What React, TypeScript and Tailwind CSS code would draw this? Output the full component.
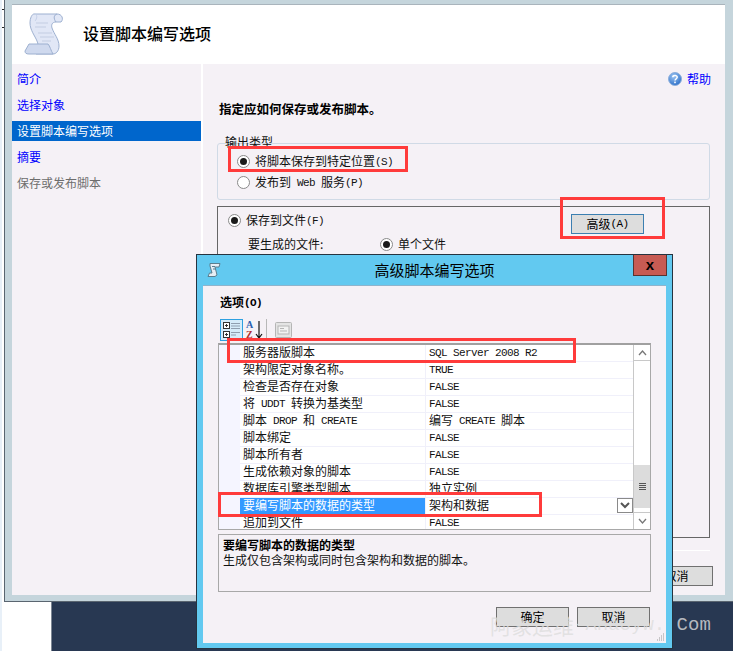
import type { ReactNode } from "react";

const rows = [
  ["服务器版脚本", "SQL Server 2008 R2"],
  ["架构限定对象名称。", "TRUE"],
  ["检查是否存在对象", "FALSE"],
  ["将 UDDT 转换为基类型", "FALSE"],
  ["脚本 DROP 和 CREATE", "编写 CREATE 脚本"],
  ["脚本绑定", "FALSE"],
  ["脚本所有者", "FALSE"],
  ["生成依赖对象的脚本", "FALSE"],
  ["数据库引擎类型脚本", "独立实例"],
  ["要编写脚本的数据的类型", "架构和数据"],
  ["追加到文件", "FALSE"],
];

// Latin runs are narrower than the CJK text around them, as in the old bitmap dialog font
function T({ children }: { children: string }) {
  const parts = children.split(/([\x20-\x7e]+)/).filter(Boolean);
  return (
    <>
      {parts.map((p, i) =>
        /^[\x20-\x7e]+$/.test(p) ? (
          <span key={i} className="whitespace-pre align-[1px] text-[11px] tracking-[-0.6px] [font-family:'Liberation_Mono',monospace]">
            {p}
          </span>
        ) : (
          <span key={i}>{p}</span>
        )
      )}
    </>
  );
}

function Radio({ on }: { on?: boolean }) {
  return (
    <span className="flex h-[13px] w-[13px] shrink-0 items-center justify-center rounded-full border border-[#8a8a8a] bg-white">
      {on && <span className="h-[7px] w-[7px] rounded-full bg-[#1a1a1a]" />}
    </span>
  );
}

function Red({ className }: { className: string }) {
  return <div className={"pointer-events-none absolute z-20 border-[3px] border-[#ff3b3b] " + className} />;
}

function Btn({ children, className }: { children: ReactNode; className: string }) {
  return (
    <div className={"flex h-[20px] items-center justify-center bg-[#dddddd] text-black " + className}>{children}</div>
  );
}

function ScrollIcon() {
  return (
    <svg width="40" height="42" viewBox="0 0 40 42">
      <path
        d="M10 1H33C38 1 40 6 37 9H32C28 9 27 12 28 15C30 21 35 26 35 33C35 38 32 41 29 41H12C15 38 15 33 13 28C11 23 6 17 6 10C6 5 8 1 10 1Z"
        fill="#e1e7f6"
        stroke="#9db0d0"
      />
      <path d="M10 1C14 1 13 6 11 8" fill="none" stroke="#c6d1e8" />
      <path d="M33 1C30 2 29 5 32 9" fill="none" stroke="#9db0d0" />
      <path d="M12 10H24M11 14H22M14 20H28M16 24H30M18 28H27" stroke="#c3cee2" strokeWidth="1.2" />
      <path d="M1 38L5 31H24C26 33 27 38 29 41H5C2 41 1 40 1 38Z" fill="#cfd9ee" stroke="#9db0d0" />
    </svg>
  );
}

function HelpIcon() {
  return (
    <svg width="14" height="14" viewBox="0 0 14 14" className="shrink-0">
      <defs>
        <radialGradient id="hg" cx="0.4" cy="0.3" r="0.8">
          <stop offset="0" stopColor="#9cc4f2" />
          <stop offset="1" stopColor="#1f66c4" />
        </radialGradient>
      </defs>
      <circle cx="7" cy="7" r="6.5" fill="url(#hg)" stroke="#8fb0dc" />
      <path d="M4.8 5.3C4.9 3 9.3 3 9.2 5.3C9.1 6.9 7 6.7 7 8.6" fill="none" stroke="#fff" strokeWidth="1.5" />
      <rect x="6.2" y="9.6" width="1.6" height="1.6" fill="#fff" />
    </svg>
  );
}

function CategorizedIcon() {
  return (
    <svg width="18" height="18" viewBox="0 0 18 18">
      <rect x="0.5" y="1.5" width="6" height="6" fill="#fff" stroke="#333" />
      <path d="M2 4.5H5M3.5 3V6" stroke="#333" />
      <rect x="0.5" y="10.5" width="6" height="6" fill="#fff" stroke="#333" />
      <path d="M2 13.5H5M3.5 12V15" stroke="#333" />
      <path d="M8 2.5H17M8 5H17M8 7.5H17M8 11.5H17M8 14H13" stroke="#8f9fb0" />
    </svg>
  );
}

function PagesIcon() {
  return (
    <svg width="17" height="16" viewBox="0 0 17 16">
      <rect x="0.5" y="0.5" width="16" height="15" rx="1" fill="#e4e4e4" stroke="#b5b5b5" />
      <rect x="3" y="4" width="11" height="8" fill="#f2f2f2" stroke="#b5b5b5" />
      <path d="M5 6.5H9M5 9H12" stroke="#b5b5b5" />
    </svg>
  );
}

export default function App() {
  return (
    <div className="relative h-[651px] w-[733px] overflow-hidden bg-white text-[12px] leading-4 text-[#111] [font-family:'Noto_Sans_CJK_SC','Liberation_Sans',sans-serif]">
      <div className="absolute left-0 top-0 h-full w-[2px] bg-[#e8f0f8]" />
      <div className="absolute left-[2px] top-[9px] h-px w-[2px] bg-[#222]" />
      <div className="absolute left-[2px] top-[27px] h-px w-[2px] bg-[#222]" />
      <div className="absolute bottom-0 left-[51px] right-0 top-[602px] border-l border-[#7d8794] bg-[#283852]" />

      {/* wizard window behind */}
      <div className="absolute left-[4px] top-0 h-[602px] w-[729px] border-b border-l border-[#5a6570] bg-[#c5d5dc] pl-[7px] pr-[8px] pt-[4px]">
        <div className="flex h-[591px] flex-col border-t border-[#a9b4bc] bg-[#f5f1f6]">
          <div className="flex h-[59px] shrink-0 items-center bg-white">
            <div className="ml-[12px] mt-[-1px]">
              <ScrollIcon />
            </div>
            <div className="ml-[19px] mt-[-3px] text-[16px] font-medium text-black">设置脚本编写选项</div>
          </div>
          <div className="flex flex-1">
            <div className="w-[189px] shrink-0 pt-[5px] text-[#0000ff]">
              {["简介", "选择对象", "设置脚本编写选项", "摘要", "保存或发布脚本"].map((s, i) => (
                <div
                  key={s}
                  className={
                    "flex h-[20px] items-center pl-[5px] mb-[6px] " +
                    (i === 2 ? "bg-[#0066cc] text-white " : "") +
                    (i === 4 ? "text-[#6d6d6d]" : "")
                  }
                >
                  {s}
                </div>
              ))}
            </div>
            <div className="w-[2px] bg-white" />
            <div className="relative flex flex-1 flex-col pl-[14px] pr-[15px]">
              <div className="-mr-px mt-[8px] flex h-[14px] items-center justify-end gap-[5px] text-[#0000ff]">
                <HelpIcon />
                <span>帮助</span>
              </div>
              <div className="mt-[15px] ml-[2px] h-[16px] text-[12.5px] font-bold text-black">指定应如何保存或发布脚本。</div>
              <div className="relative mt-[26px] flex h-[57px] flex-col gap-[5px] rounded-[3px] border border-[#d0dae6] pl-[19px] pt-[9px]">
                <span className="absolute left-[7px] top-[-10px]">输出类型</span>
                <div className="flex h-[16px] items-center gap-[5px]">
                  <Radio on />
                  <span>
                    <T>将脚本保存到特定位置(S)</T>
                  </span>
                </div>
                <div className="flex h-[16px] items-center gap-[5px]">
                  <Radio />
                  <span>
                    <T>发布到 Web 服务(P)</T>
                  </span>
                </div>
              </div>
              <div className="mt-[6px] h-[332px] border border-[#666666] px-[10px] pt-[5px]">
                <div className="flex items-start justify-between">
                  <div className="flex h-[16px] items-center gap-[5px]">
                    <Radio on />
                    <span>
                      <T>保存到文件(F)</T>
                    </span>
                  </div>
                  <Btn className="mr-[55px] mt-[2px] w-[73px] border border-[#3c7fb1]">
                    <T>高级(A)</T>
                  </Btn>
                </div>
                <div className="ml-[20px] mt-[2px] flex h-[16px] items-center">
                  <span className="w-[132px]">要生成的文件:</span>
                  <Radio on />
                  <span className="ml-[5px]">单个文件</span>
                </div>
              </div>
              <div className="mt-[12px] border-t border-white" />
              <div className="mt-[15px] flex justify-end">
                <Btn className="-mr-[3px] w-[73px] border border-[#707070]">取消</Btn>
              </div>
            </div>
          </div>
        </div>
      </div>

      {/* advanced options dialog */}
      <div className="absolute left-[196px] top-[254px] z-10 h-[395px] w-[477px] border border-[#26333f] bg-[#62c9f0] px-[6px] pb-[6px] pt-[30px]">
        <div className="absolute right-[5px] top-0 flex h-[21px] w-[34px] items-center justify-center border border-t-0 border-[#5a3330] bg-[#c75b53] text-[15px] font-bold text-black [font-family:'Liberation_Sans',sans-serif]">
          x
        </div>
        <div className="absolute left-[10px] top-[8px]">
          <svg width="14" height="14" viewBox="0 0 14 14">
            <path d="M3 .5H13L12 4H8L10 12L8 13.5H1L2.5 10H5L3 3Z" fill="#e6eef5" stroke="#5b7e8e" />
            <path d="M5 3.5H8M6 6H9" stroke="#5b7e8e" />
          </svg>
        </div>
        <div className="absolute inset-x-0 top-[5px] text-center text-[15px] leading-5 text-black">高级脚本编写选项</div>

        <div className="flex h-[358px] flex-col border-t border-[#8fb4cc] bg-[#f5f1f6] pl-[15px] pr-[15px]">
          <div className="ml-[2px] mt-[8px] h-[16px] font-bold text-black">
            <T>选项(O)</T>
          </div>
          <div className="ml-[2px] mt-[9px] flex h-[22px] items-center">
            <div className="flex h-[22px] w-[23px] items-center justify-center border border-[#2ea0e0] bg-[#d5ecfa]">
              <CategorizedIcon />
            </div>
            <div className="ml-[3px] flex w-[10px] flex-col text-[10px] font-bold leading-[10px] [font-family:'Liberation_Serif',serif]">
              <span className="text-[#2a5fb0]">A</span>
              <span className="text-[#b03030]">Z</span>
            </div>
            <svg width="8" height="20" viewBox="0 0 8 20" className="ml-[-1px]">
              <path d="M4 1V18M1 14L4 18L7 14" fill="none" stroke="#111" strokeWidth="1.2" />
            </svg>
            <div className="ml-[3px] h-[22px] w-px bg-[#b8b8b8]" />
            <div className="ml-[8px]">
              <PagesIcon />
            </div>
          </div>
          {/* property grid */}
          <div className="mt-[2px] flex h-[187px] border border-t-2 border-[#a8a8a8] border-t-[#a0a0a0] bg-white">
            <div className="h-full w-[21px] shrink-0 bg-[#f5f5ff]" />
            <div className="min-w-0 flex-1 overflow-hidden">
              {rows.map(([name, value], i) => (
                <div key={name} className="grid h-[17px] grid-cols-[186px_1fr] border-b border-[#f0f0fa] leading-[13px]">
                  <div
                    className={
                      "border-r border-[#f0f0fa] pl-[3px] " +
                      (i === 9 ? "bg-[#3399ff] text-white" : "text-[#111]")
                    }
                  >
                    <T>{name}</T>
                  </div>
                  <div className="relative pl-[3px]">
                    <T>{value}</T>
                    {i === 9 && (
                      <div className="absolute right-0 top-0 flex h-[15px] w-[16px] items-center justify-center border border-[#8a8a8a] bg-white">
                        <svg width="10" height="7" viewBox="0 0 10 7">
                          <path d="M1 1L5 5L9 1" fill="none" stroke="#555" strokeWidth="2" />
                        </svg>
                      </div>
                    )}
                  </div>
                </div>
              ))}
            </div>
            <div className="flex w-[17px] shrink-0 flex-col border-l border-[#c8c8c8] bg-white">
              <div className="flex h-[16px] items-center justify-center border-b border-[#c8c8c8]">
                <svg width="9" height="6" viewBox="0 0 9 6">
                  <path d="M1 5L4.5 1L8 5" fill="none" stroke="#777" strokeWidth="1.3" />
                </svg>
              </div>
              <div className="flex-1" />
              <div className="flex h-[43px] flex-col items-center justify-center gap-[1px] bg-[#dcdcdc]">
                <span className="h-px w-[7px] bg-[#555]" />
                <span className="h-px w-[7px] bg-[#555]" />
                <span className="h-px w-[7px] bg-[#555]" />
                <span className="h-px w-[7px] bg-[#555]" />
              </div>
              <div className="flex mt-[4px] h-[17px] items-center justify-center border-t border-[#c8c8c8]">
                <svg width="9" height="6" viewBox="0 0 9 6">
                  <path d="M1 1L4.5 5L8 1" fill="none" stroke="#777" strokeWidth="1.3" />
                </svg>
              </div>
            </div>
          </div>
          <div className="mt-[4px] h-[58px] border border-[#a8a8a8] px-[4px] pt-[2px] leading-[15px]">
            <div className="font-bold text-black">要编写脚本的数据的类型</div>
            <div className="whitespace-nowrap">生成仅包含架构或同时包含架构和数据的脚本。</div>
          </div>
          <div className="mr-px mt-[15px] flex justify-end gap-[8px]">
            <Btn className="w-[73px] border border-[#707070]">确定</Btn>
            <Btn className="w-[73px] border border-[#707070]">取消</Btn>
          </div>
        </div>
        <svg width="8" height="8" viewBox="0 0 8 8" className="absolute bottom-[7px] right-[7px]">
          <path d="M6 1h1M4 3h1M6 3h1M2 5h1M4 5h1M6 5h1M0 7h1M2 7h1M4 7h1M6 7h1" stroke="#9a9a9a" />
        </svg>
      </div>

      {/* annotations */}
      <Red className="left-[228px] top-[146px] h-[26px] w-[180px]" />
      <Red className="left-[560px] top-[197px] h-[42px] w-[105px]" />
      <Red className="left-[227px] top-[338px] h-[25px] w-[349px]" />
      <Red className="left-[218px] top-[492px] h-[25px] w-[324px]" />

      <div className="pointer-events-none absolute left-[490px] top-[611px] z-30 flex items-center whitespace-pre text-[19px] leading-7 text-[#dddddd]/80 [font-family:'Liberation_Mono',monospace]">
        <span className="text-[21px] [font-family:'Noto_Sans_CJK_SC',sans-serif]">阿象运维</span>
        <span>-Ahaoyw. Com</span>
      </div>
    </div>
  );
}
